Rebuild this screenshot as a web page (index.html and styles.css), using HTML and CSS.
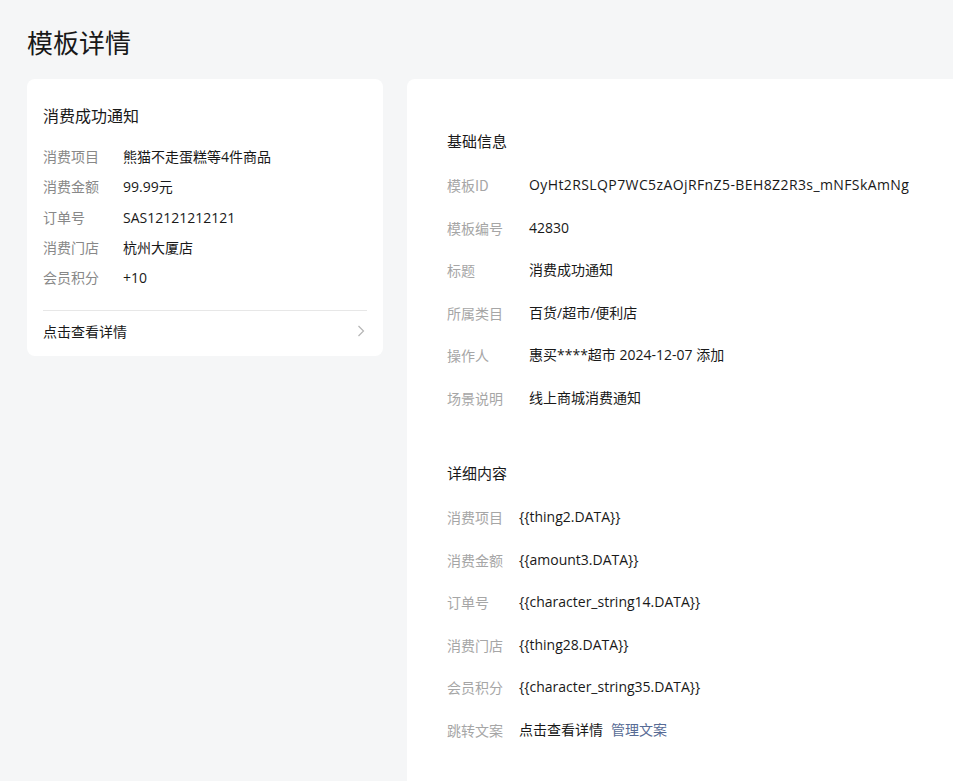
FILE: index.html
```html
<!DOCTYPE html>
<html lang="zh">
<head>
<meta charset="utf-8">
<link rel="stylesheet" href="styles.css">
</head>
<body>
<div class="page">
  <h1 class="title">模板详情</h1>
  <div class="main">
    <div class="preview">
      <div class="preview-body">
        <div class="preview-title">消费成功通知</div>
        <div class="pv-row"><span class="pv-label">消费项目</span><span class="pv-value">熊猫不走蛋糕等4件商品</span></div>
        <div class="pv-row"><span class="pv-label">消费金额</span><span class="pv-value">99.99元</span></div>
        <div class="pv-row"><span class="pv-label">订单号</span><span class="pv-value">SAS12121212121</span></div>
        <div class="pv-row"><span class="pv-label">消费门店</span><span class="pv-value">杭州大厦店</span></div>
        <div class="pv-row"><span class="pv-label">会员积分</span><span class="pv-value">+10</span></div>
      </div>
      <div class="preview-foot">
        <span>点击查看详情</span>
        <svg class="chev" width="8" height="12" viewBox="0 0 8 12"><path d="M1.5 1 L6.5 6 L1.5 11" fill="none" stroke="#b5b5b5" stroke-width="1.2"/></svg>
      </div>
    </div>
    <div class="detail">
      <div class="section">
        <div class="sec-title">基础信息</div>
        <div class="d-row"><span class="d-label">模板ID</span><span class="d-value id-value">OyHt2RSLQP7WC5zAOjRFnZ5-BEH8Z2R3s_mNFSkAmNg</span></div>
        <div class="d-row"><span class="d-label">模板编号</span><span class="d-value">42830</span></div>
        <div class="d-row"><span class="d-label">标题</span><span class="d-value">消费成功通知</span></div>
        <div class="d-row"><span class="d-label">所属类目</span><span class="d-value">百货/超市/便利店</span></div>
        <div class="d-row"><span class="d-label">操作人</span><span class="d-value">惠买****超市 2024-12-07 添加</span></div>
        <div class="d-row"><span class="d-label">场景说明</span><span class="d-value">线上商城消费通知</span></div>
      </div>
      <div class="section section-2">
        <div class="sec-title">详细内容</div>
        <div class="d-row narrow"><span class="d-label">消费项目</span><span class="d-value">{{thing2.DATA}}</span></div>
        <div class="d-row narrow"><span class="d-label">消费金额</span><span class="d-value">{{amount3.DATA}}</span></div>
        <div class="d-row narrow"><span class="d-label">订单号</span><span class="d-value">{{character_string14.DATA}}</span></div>
        <div class="d-row narrow"><span class="d-label">消费门店</span><span class="d-value">{{thing28.DATA}}</span></div>
        <div class="d-row narrow"><span class="d-label">会员积分</span><span class="d-value">{{character_string35.DATA}}</span></div>
        <div class="d-row narrow"><span class="d-label">跳转文案</span><span class="d-value">点击查看详情<a class="link">管理文案</a></span></div>
      </div>
    </div>
  </div>
</div>
</body>
</html>
```
FILE: styles.css
```css
html, body {
  margin: 0;
  padding: 0;
  background: #f5f6f7;
  font-family: "Open Sans", "Noto Sans CJK SC", sans-serif;
  color: #191919;
  height: 781px;
  overflow: hidden;
}
.page {
  padding: 22px 0 0 27px;
}
.title {
  margin: 0;
  font-family: "Noto Sans CJK SC", sans-serif;
  font-size: 26px;
  font-weight: 400;
  line-height: 40px;
  color: #191919;
}
.main {
  display: flex;
  align-items: flex-start;
  gap: 24px;
  margin-top: 17px;
}
.preview {
  width: 356px;
  background: #fff;
  border-radius: 8px;
  box-sizing: border-box;
  padding: 0 16px;
}
.preview-body {
  padding: 24px 0 17px;
  border-bottom: 1px solid #e7e7e7;
}
.preview-title {
  font-size: 16px;
  line-height: 26px;
  margin-bottom: 13px;
}
.pv-row {
  display: flex;
  font-size: 14px;
  line-height: 30.3px;
}
.pv-label {
  width: 80px;
  color: #888;
  flex: none;
}
.pv-value {
  color: #191919;
}
.preview-foot {
  display: flex;
  justify-content: space-between;
  align-items: center;
  height: 40px;
  padding-bottom: 5px;
  font-size: 14px;
}
.chev {
  margin-right: 2px;
}
.detail {
  flex: 1;
  background: #fff;
  border-radius: 8px 0 0 0;
  height: 702px;
  box-sizing: border-box;
  padding: 48px 40px 0;
}
.sec-title {
  font-size: 15px;
  line-height: 28px;
  margin-bottom: 9px;
}
.d-row {
  display: flex;
  font-size: 14px;
  line-height: 42.5px;
}
.d-label {
  width: 82px;
  flex: none;
  color: #a6a6a6;
  font-family: "Noto Sans CJK SC", sans-serif;
}
.d-row.narrow .d-label {
  width: 72px;
}
.d-value {
  color: #191919;
}
.id-value {
  letter-spacing: 0.4px;
}
.section-2 {
  margin-top: 40px;
}
.link {
  color: #576b95;
  margin-left: 8px;
}
```
